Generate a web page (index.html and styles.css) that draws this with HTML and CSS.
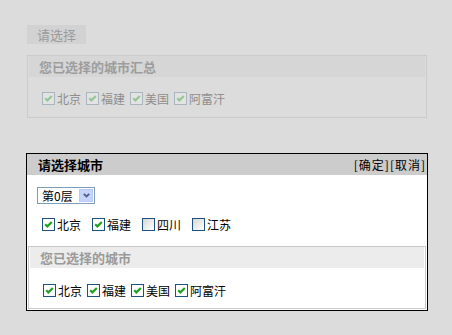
FILE: index.html
```html
<!DOCTYPE html>
<html lang="zh-CN">
<head>
<meta charset="utf-8">
<title>请选择城市</title>
<link rel="stylesheet" href="styles.css">
</head>
<body>
<div class="page">
  <div class="fake-btn">请选择</div>

  <div class="summary summary--muted">
    <div class="summary-head">您已选择的城市汇总</div>
    <div class="cb-row cb-row--tight">
      <label class="cb-item"><span class="cb"><svg viewBox="0 0 11 11" width="11" height="11"><path d="M2.2 5.2 L4.4 7.4 L8.8 3" /></svg></span>北京</label>
      <label class="cb-item"><span class="cb"><svg viewBox="0 0 11 11" width="11" height="11"><path d="M2.2 5.2 L4.4 7.4 L8.8 3" /></svg></span>福建</label>
      <label class="cb-item"><span class="cb"><svg viewBox="0 0 11 11" width="11" height="11"><path d="M2.2 5.2 L4.4 7.4 L8.8 3" /></svg></span>美国</label>
      <label class="cb-item"><span class="cb"><svg viewBox="0 0 11 11" width="11" height="11"><path d="M2.2 5.2 L4.4 7.4 L8.8 3" /></svg></span>阿富汗</label>
    </div>
  </div>

  <div class="dialog">
    <div class="dialog-head">
      <span class="dialog-title">请选择城市</span>
      <span class="dialog-actions">[确定][取消]</span>
    </div>
    <div class="dialog-body">
      <div class="select">
        <span class="select-text">第0层</span>
        <span class="select-btn"><svg viewBox="0 0 7 5" width="7" height="5"><path d="M0.8 0.8 L3.5 3.5 L6.2 0.8" /></svg></span>
      </div>
      <div class="cb-row cb-row--wide">
        <label class="cb-item"><span class="cb"><svg viewBox="0 0 11 11" width="11" height="11"><path d="M2.2 5.2 L4.4 7.4 L8.8 3" /></svg></span>北京</label>
        <label class="cb-item"><span class="cb"><svg viewBox="0 0 11 11" width="11" height="11"><path d="M2.2 5.2 L4.4 7.4 L8.8 3" /></svg></span>福建</label>
        <label class="cb-item"><span class="cb cb--off"></span>四川</label>
        <label class="cb-item"><span class="cb cb--off"></span>江苏</label>
      </div>
    </div>
    <div class="summary summary--inner">
      <div class="summary-head">您已选择的城市</div>
      <div class="cb-row cb-row--tight">
        <label class="cb-item"><span class="cb"><svg viewBox="0 0 11 11" width="11" height="11"><path d="M2.2 5.2 L4.4 7.4 L8.8 3" /></svg></span>北京</label>
        <label class="cb-item"><span class="cb"><svg viewBox="0 0 11 11" width="11" height="11"><path d="M2.2 5.2 L4.4 7.4 L8.8 3" /></svg></span>福建</label>
        <label class="cb-item"><span class="cb"><svg viewBox="0 0 11 11" width="11" height="11"><path d="M2.2 5.2 L4.4 7.4 L8.8 3" /></svg></span>美国</label>
        <label class="cb-item"><span class="cb"><svg viewBox="0 0 11 11" width="11" height="11"><path d="M2.2 5.2 L4.4 7.4 L8.8 3" /></svg></span>阿富汗</label>
      </div>
    </div>
  </div>
</div>
</body>
</html>
```

FILE: styles.css
```css
* {
  box-sizing: border-box;
}

body {
  margin: 0;
  background: #dcdcdc;
  font-family: "Noto Sans CJK SC", "Noto Sans", sans-serif;
  font-size: 12px;
  color: #000;
}

.page {
  padding: 25px 0 0 26px;
  width: 428px;
}

.fake-btn {
  margin-left: 1px;
  width: 59px;
  height: 19px;
  line-height: 19px;
  background: #d2d2d2;
  color: #9b9b9b;
  font-size: 13px;
  text-align: center;
}

/* summary boxes */
.summary {
  border: 1px solid #c8c8c8;
  padding: 0 1px;
}

.summary-head {
  height: 21px;
  line-height: 21px;
  padding-left: 10px;
  font-size: 13px;
  font-weight: bold;
}

.summary--muted {
  width: 400px;
  margin: 11px 0 0 1px;
  border-color: #cbcbcb;
  color: #8e8e8e;
}

.summary--muted .summary-head {
  background: #d6d6d6;
  color: #9d9d9d;
}

.summary--muted .cb-row {
  padding: 15px 0 12px 13px;
}

.summary--muted .cb {
  border-color: #a9b5bf;
  background: #e3e3e3;
}

.summary--muted .cb path {
  stroke: #95c795;
}

.summary--inner {
  margin: 0 1px 1px 1px;
  border-color: #c9c9c9;
}

.summary--inner .summary-head {
  background: #ececec;
  color: #9a9a9a;
}

.summary--inner .cb-row {
  padding: 16px 0 11px 13px;
}

/* checkbox rows */
.cb-row {
  display: flex;
  align-items: center;
}

.cb-item {
  display: flex;
  align-items: center;
  height: 13px;
  line-height: 13px;
}

.cb-row--tight .cb-item {
  margin-right: 5px;
}

.cb-row--wide .cb-item {
  margin-right: 11px;
}

.cb {
  display: inline-flex;
  width: 13px;
  height: 13px;
  border: 1px solid #1c5180;
  background: #fff;
  margin-right: 2px;
  flex-shrink: 0;
}

.cb svg {
  display: block;
}

.cb path {
  fill: none;
  stroke: #21a121;
  stroke-width: 2.2;
}

.cb--off {
  background: linear-gradient(135deg, #d6d6d0 0%, #f4f4f2 70%, #ffffff 100%);
}

/* dialog */
.dialog {
  width: 402px;
  margin-top: 35px;
  border: 1px solid #000;
  background: #fff;
}

.dialog-head {
  display: flex;
  justify-content: space-between;
  align-items: center;
  height: 21px;
  padding: 0 1px 0 11px;
  background: #cccccc;
}

.dialog-title {
  font-size: 13px;
  font-weight: bold;
}

.dialog-actions {
  font-size: 12px;
  letter-spacing: 1px;
}

.dialog-body {
  padding: 12px 0 15px 0;
}

.select {
  display: flex;
  align-items: center;
  width: 58px;
  height: 17px;
  margin-left: 10px;
  border: 1px solid #7f9db9;
  background: #fff;
}

.select-text {
  padding-left: 4px;
  line-height: 15px;
}

.select-btn {
  display: flex;
  align-items: center;
  justify-content: center;
  margin-left: auto;
  margin-right: 1px;
  width: 14px;
  height: 13px;
  background: #c3d3fb;
  border: 1px solid #b8caf5;
}

.select-btn path {
  fill: none;
  stroke: #4d6185;
  stroke-width: 1.8;
}

.cb-row--wide {
  margin-top: 14px;
  padding-left: 15px;
}
```
